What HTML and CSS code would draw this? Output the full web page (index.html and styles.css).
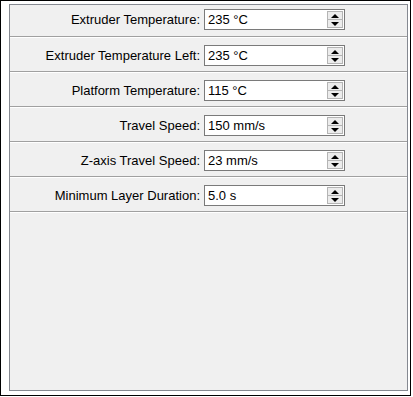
FILE: index.html
```html
<!DOCTYPE html>
<html lang="en">
<head>
    <meta charset="UTF-8">
    <title>Print Settings</title>
    <link rel="stylesheet" href="styles.css">
</head>
<body>
    <div class="frame">
        <div class="panel">
            <div class="row">
                <label class="label">Extruder Temperature:</label>
                <div class="spin"><span class="value">235 °C</span><span class="arrows"><span class="up"></span><span class="down"></span></span></div>
            </div>
            <div class="row">
                <label class="label">Extruder Temperature Left:</label>
                <div class="spin"><span class="value">235 °C</span><span class="arrows"><span class="up"></span><span class="down"></span></span></div>
            </div>
            <div class="row">
                <label class="label">Platform Temperature:</label>
                <div class="spin"><span class="value">115 °C</span><span class="arrows"><span class="up"></span><span class="down"></span></span></div>
            </div>
            <div class="row">
                <label class="label">Travel Speed:</label>
                <div class="spin"><span class="value">150 mm/s</span><span class="arrows"><span class="up"></span><span class="down"></span></span></div>
            </div>
            <div class="row">
                <label class="label">Z-axis Travel Speed:</label>
                <div class="spin"><span class="value">23 mm/s</span><span class="arrows"><span class="up"></span><span class="down"></span></span></div>
            </div>
            <div class="row">
                <label class="label">Minimum Layer Duration:</label>
                <div class="spin"><span class="value">5.0 s</span><span class="arrows"><span class="up"></span><span class="down"></span></span></div>
            </div>
        </div>
    </div>
</body>
</html>
```

FILE: styles.css
```css
body {
    margin: 0;
    background-color: #ffffff;
    font-family: "Liberation Sans", Arial, sans-serif;
    font-size: 13px;
    color: #000000;
}

.frame {
    width: 411px;
    height: 396px;
    box-sizing: border-box;
    border: 1px solid #000000;
    padding: 3px 2px 4px 8px;
}

.panel {
    height: 100%;
    box-sizing: border-box;
    border: 1px solid #858991;
    background-color: #f0f0f0;
}

.row {
    display: flex;
    align-items: center;
    padding: 7px 0 5px 0;
    border-bottom: 1px solid #a0a0a0;
    box-shadow: 0 1px 0 #ffffff;
    margin-bottom: 1px;
}

.row:first-child {
    padding-top: 4px;
    padding-bottom: 6px;
}

.label {
    width: 190px;
    text-align: right;
    padding-right: 4px;
}

.spin {
    display: flex;
    align-items: center;
    justify-content: space-between;
    width: 141px;
    height: 21px;
    box-sizing: border-box;
    border: 1px solid #7a7a7a;
    background-color: #ffffff;
    padding: 0 1px 0 3px;
}

.value {
    line-height: 19px;
}

.arrows {
    display: flex;
    flex-direction: column;
    width: 16px;
    height: 17px;
    box-sizing: border-box;
    border: 1px solid #b4b4b4;
    background-color: #ececec;
}

.up, .down {
    flex: 1;
    display: flex;
    align-items: center;
    justify-content: center;
}

.up::before {
    content: "";
    border-left: 4px solid transparent;
    border-right: 4px solid transparent;
    border-bottom: 4px solid #000000;
}

.down {
    border-top: 1px solid #b4b4b4;
}

.down::before {
    content: "";
    border-left: 4px solid transparent;
    border-right: 4px solid transparent;
    border-top: 4px solid #000000;
}
```
